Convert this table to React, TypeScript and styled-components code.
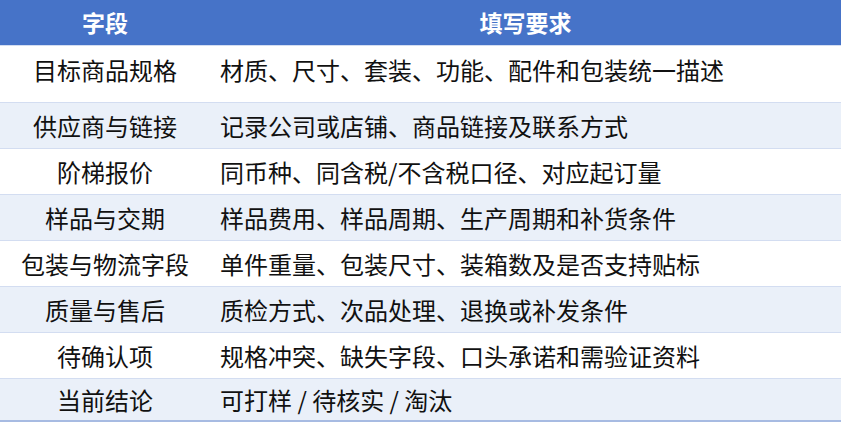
import React from "react";
import styled, { createGlobalStyle } from "styled-components";

const Global = createGlobalStyle`
  html, body { margin: 0; padding: 0; background: #ffffff; }
  body { font-family: "Noto Sans CJK SC", "Noto Sans", sans-serif; }
`;

const Table = styled.div`
  width: 841px;
  display: flex;
  flex-direction: column;
  border-bottom: 2px solid #a7bbe2;
`;

const HeaderRow = styled.div`
  display: grid;
  grid-template-columns: 210px 1fr;
  height: 45px;
  background: #4673c8;
  color: #ffffff;
  font-weight: 700;
  font-size: 23px;
  align-items: center;
`;

const HeaderCell = styled.div`
  text-align: center;
  line-height: 1;
`;

const Row = styled.div<{ $alt: boolean; $h: number; $pb: number }>`
  display: grid;
  grid-template-columns: 210px 1fr;
  height: ${(p) => p.$h}px;
  padding-bottom: ${(p) => p.$pb}px;
  box-sizing: content-box;
  align-items: center;
  background: ${(p) => (p.$alt ? "#eaf0f9" : "#ffffff")};
  border-top: 1px solid #d3ddf1;
  color: #111111;
  font-size: 24px;
  overflow: hidden;
  &:first-of-type {
    border-top: none;
  }
`;

const FieldCell = styled.div`
  text-align: center;
  line-height: 1;
`;

const ReqCell = styled.div`
  padding-left: 10px;
  line-height: 1;
  white-space: nowrap;
`;

const rows: [string, string][] = [
  ["目标商品规格", "材质、尺寸、套装、功能、配件和包装统一描述"],
  ["供应商与链接", "记录公司或店铺、商品链接及联系方式"],
  ["阶梯报价", "同币种、同含税/不含税口径、对应起订量"],
  ["样品与交期", "样品费用、样品周期、生产周期和补货条件"],
  ["包装与物流字段", "单件重量、包装尺寸、装箱数及是否支持贴标"],
  ["质量与售后", "质检方式、次品处理、退换或补发条件"],
  ["待确认项", "规格冲突、缺失字段、口头承诺和需验证资料"],
  ["当前结论", "可打样 / 待核实 / 淘汰"],
];

export default function App() {
  return (
    <>
      <Global />
      <Table>
        <HeaderRow>
          <HeaderCell>字段</HeaderCell>
          <HeaderCell>填写要求</HeaderCell>
        </HeaderRow>
        {rows.map(([f, r], i) => (
          <Row
            key={f}
            $alt={i % 2 === 1}
            $h={i === 0 ? 48 : i === rows.length - 1 ? 41 : 45}
            $pb={i === 0 ? 8 : 0}
          >
            <FieldCell>{f}</FieldCell>
            <ReqCell>{r}</ReqCell>
          </Row>
        ))}
      </Table>
    </>
  );
}
